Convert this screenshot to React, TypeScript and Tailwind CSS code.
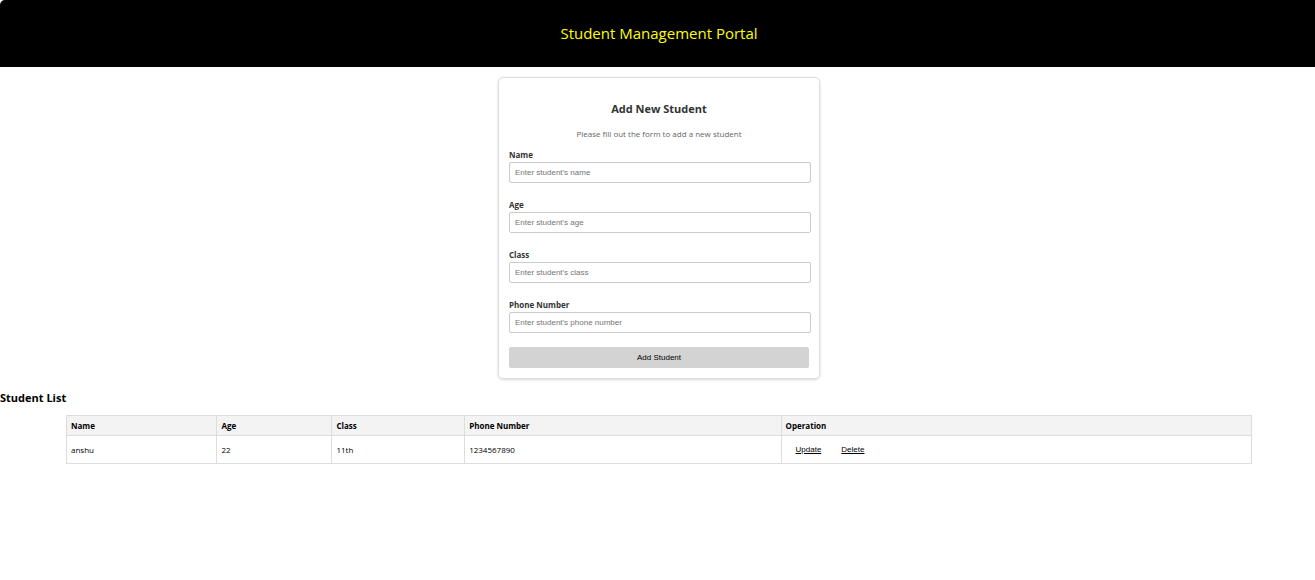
import React from "react";

type Student = { name: string; age: number; className: string; phone: string };

const fields = [
  { id: "name", label: "Name", placeholder: "Enter student's name", type: "text" },
  { id: "age", label: "Age", placeholder: "Enter student's age", type: "text" },
  { id: "class", label: "Class", placeholder: "Enter student's class", type: "text" },
  { id: "phone", label: "Phone Number", placeholder: "Enter student's phone number", type: "tel" },
];

const students: Student[] = [{ name: "anshu", age: 22, className: "11th", phone: "1234567890" }];

const headCell = "h-5 border border-[#dddddd] px-1 pt-px text-left font-bold";
const bodyCell = "h-7 border border-[#dddddd] px-1 pt-px";

function StudentForm() {
  return (
    <form
      onSubmit={(e) => e.preventDefault()}
      className="w-[322px] rounded-[5px] border border-[#dddddd] px-[10px] pt-[21px] pb-[10px] shadow-[0_1px_3px_rgba(0,0,0,0.15)]"
    >
      <h2 className="text-center text-[11px] leading-[20px] font-bold text-[#333333]">Add New Student</h2>
      <p className="mt-[9px] mb-2 text-center text-[8px] leading-[12px] text-[#666666]">
        Please fill out the form to add a new student
      </p>
      <div className="flex flex-col gap-[15px]">
        {fields.map((f) => (
          <div key={f.id} className="flex flex-col">
            <label htmlFor={f.id} className="text-[8px] leading-[14px] font-bold text-[#333333]">
              {f.label}
            </label>
            <input
              id={f.id}
              type={f.type}
              placeholder={f.placeholder}
              className="-mr-[2px] h-[21px] rounded-[2px] border border-[#cccccc] px-[5px] font-['Liberation_Sans',Arial,sans-serif] text-[8px] text-black placeholder:text-[#757575]"
            />
          </div>
        ))}
      </div>
      <button
        type="submit"
        className="mt-[14px] h-[21px] w-full rounded-[2px] bg-[#d3d3d3] font-['Liberation_Sans',Arial,sans-serif] text-[8px] text-black"
      >
        Add Student
      </button>
    </form>
  );
}

function StudentTable() {
  return (
    <section className="mt-[11px]">
      <h2 className="text-[11px] leading-[16px] font-bold">Student List</h2>
      <div className="mt-[9px] pr-[63px] pl-[66px]">
        <table className="w-full table-fixed border-collapse text-[8px] leading-[12px]">
          <colgroup>
            <col className="w-[12.7%]" />
            <col className="w-[9.7%]" />
            <col className="w-[11.2%]" />
            <col className="w-[26.7%]" />
            <col />
          </colgroup>
          <thead className="bg-[#f3f3f3]">
            <tr>
              <th className={headCell}>Name</th>
              <th className={headCell}>Age</th>
              <th className={headCell}>Class</th>
              <th className={headCell}>Phone Number</th>
              <th className={headCell}>Operation</th>
            </tr>
          </thead>
          <tbody>
            {students.map((s) => (
              <tr key={s.phone}>
                <td className={bodyCell}>{s.name}</td>
                <td className={bodyCell}>{s.age}</td>
                <td className={bodyCell}>{s.className}</td>
                <td className={bodyCell}>{s.phone}</td>
                <td className="h-7 border border-[#dddddd] px-1">
                  <div className="flex gap-5 px-[10px] font-['Liberation_Sans',Arial,sans-serif]">
                    <button type="button" className="underline">Update</button>
                    <button type="button" className="underline">Delete</button>
                  </div>
                </td>
              </tr>
            ))}
          </tbody>
        </table>
      </div>
    </section>
  );
}

export default function App() {
  return (
    <div className="min-h-screen bg-white font-['Segoe_UI','Open_Sans','Noto_Sans',sans-serif] text-black">
      <header className="rounded-tl-[5px] bg-black py-[21px] pl-[3px] text-center">
        <h1 className="text-[15px] leading-[25px] text-[#ffff00]">Student Management Portal</h1>
      </header>
      <main>
        <div className="flex justify-center pt-[10px] pl-[3px]">
          <StudentForm />
        </div>
        <StudentTable />
      </main>
    </div>
  );
}
